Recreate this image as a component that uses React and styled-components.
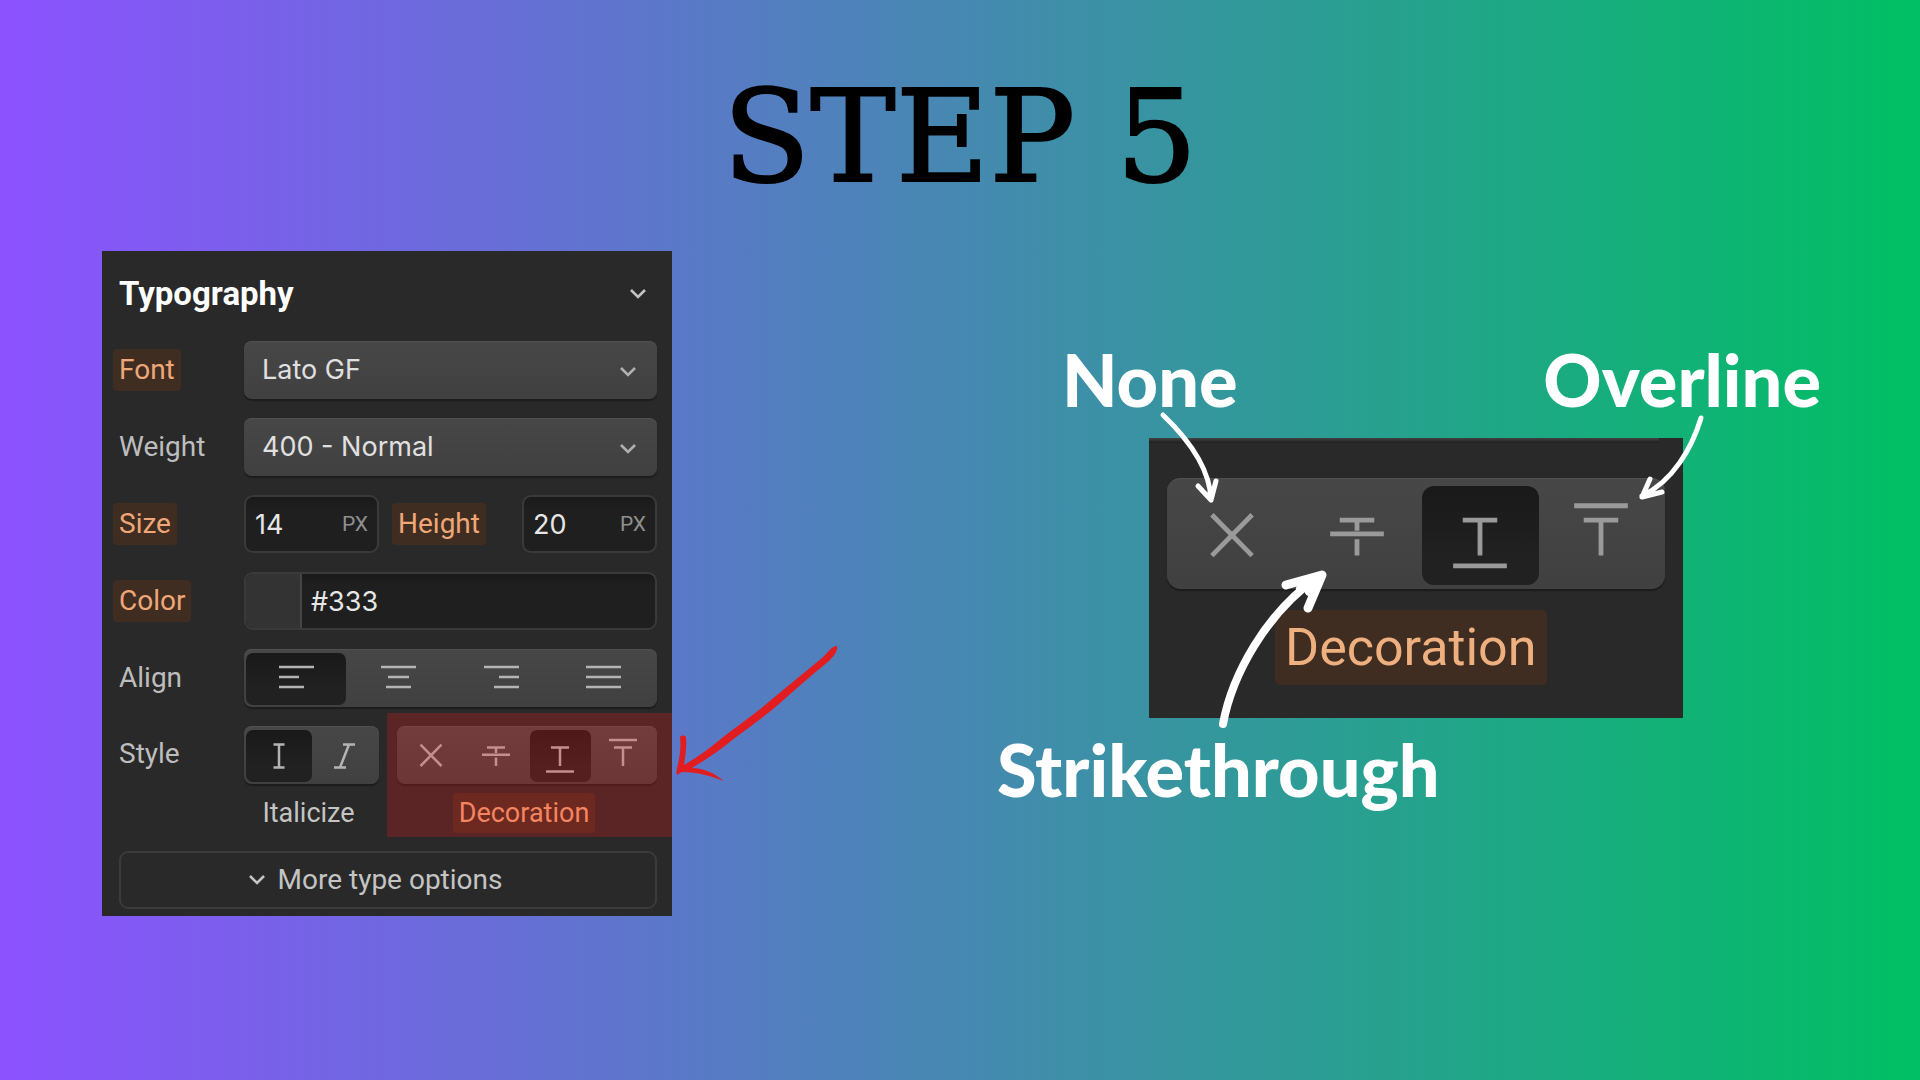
import React, { useState } from "react";
import styled, { createGlobalStyle, css } from "styled-components";

const GlobalStyle = createGlobalStyle`
  *, *::before, *::after { box-sizing: border-box; }
  body { margin: 0; }
  button, input, select { font: inherit; color: inherit; margin: 0; }
`;

const ui = `Roboto, Inter, "Liberation Sans", sans-serif`;
const valueFont = css`
  font-family: Inter, Roboto, "Liberation Sans", sans-serif;
  font-size: 27px;
`;

const Slide = styled.main`
  min-height: 100vh;
  background: linear-gradient(90deg, #8c52ff, #00bf63);
  font-family: ${ui};
`;

const Title = styled.h1`
  margin: 0;
  padding: 73px 0 50px;
  text-align: center;
  font: 400 128px/128px "DejaVu Serif", serif;
  color: #000;
  -webkit-text-stroke: 2px #000;
`;

const Stage = styled.div`
  display: flex;
  justify-content: space-between;
  align-items: flex-start;
  padding: 0 99px 48px 102px;
`;

const Panel = styled.section`
  position: relative;
  width: 570px;
  padding: 0 15px 7px 17px;
  background: #292929;
  color: #d9d9d9;
  font-size: 28px;
  line-height: 42px;
`;

const PanelHeader = styled.header`
  display: flex;
  justify-content: space-between;
  align-items: center;
  height: 85px;
  margin-bottom: 5px;
  padding-right: 10px;
`;

const PanelTitle = styled.h2`
  margin: 0;
  font-size: 33px;
  font-weight: 700;
  color: #fff;
`;

const IconButton = styled.button`
  display: grid;
  place-items: center;
  padding: 0;
  border: 0;
  background: none;
  color: #c4c4c4;
`;

const Rows = styled.div`
  display: grid;
  gap: 19px;
`;

const Row = styled.div`
  display: grid;
  grid-template-columns: 125px 1fr;
  align-items: center;
`;

const tagged = css`
  margin-left: -6px;
  padding: 0 6px;
  border-radius: 4px;
  background: #402d22;
  color: #efa777;
`;

const Label = styled.label`
  justify-self: start;
  color: #bdbdbd;
  ${(p) => p.$tagged && tagged}
`;

const Controls = styled.div`
  display: flex;
  align-items: center;
  gap: 19px;
`;

const SelectBox = styled.div`
  position: relative;
  svg {
    position: absolute;
    right: 20px;
    top: 25px;
    color: #b0b0b0;
    pointer-events: none;
  }
`;

const raised = css`
  border: 0;
  border-radius: 8px;
  background: linear-gradient(#474747, #404040);
  box-shadow: inset 0 1px 0 #505050, 0 2px 1px #1c1c1c;
`;

const Select = styled.select`
  ${raised}
  ${valueFont}
  display: block;
  appearance: none;
  width: 100%;
  height: 58px;
  padding: 0 18px;
  color: #e0e0e0;
`;

const Field = styled.div`
  display: flex;
  align-items: center;
  width: ${(p) => (p.$wide ? "100%" : "135px")};
  height: 58px;
  overflow: hidden;
  border: 2px solid #3a3a3a;
  border-radius: 9px;
  background: linear-gradient(#1a1a1a, #1f1f1f 12px);
  color: #e6e6e6;
  &:last-child { margin-left: auto; }
`;

const TextInput = styled.input`
  ${valueFont}
  flex: 1;
  min-width: 0;
  width: 100%;
  height: 100%;
  padding: 0 9px;
  border: 0;
  outline: 0;
  background: none;
`;

const Unit = styled.span`
  padding-right: 9px;
  font-size: 21px;
  color: #8f8f8f;
`;

const Swatch = styled.input`
  appearance: none;
  flex: none;
  width: 56px;
  height: 54px;
  padding: 0;
  border: 0;
  border-right: 2px solid #454545;
  background: #333;
  &::-webkit-color-swatch-wrapper { padding: 0; }
  &::-webkit-color-swatch { border: 0; }
`;

const Segments = styled.div`
  ${raised}
  display: grid;
  grid-template-columns: ${(p) => p.$columns};
  height: ${(p) => (p.$large ? "111px" : "58px")};
  padding: ${(p) => (p.$large ? "8px 3px 4px" : "4px 2px 2px")};
  border-radius: ${(p) => (p.$large ? "14px" : "8px")};
`;

const Segment = styled.button`
  display: grid;
  place-items: center;
  padding: 0 0 3px;
  border: 0;
  border-radius: ${(p) => (p.$large ? "12px" : "7px")};
  background: ${(p) => (p["aria-pressed"] ? "linear-gradient(#191919, #212121 70%)" : "none")};
  color: ${(p) => (p.$large ? "#9a9a9a" : "#b4b4b4")};
`;

const StyleGrid = styled.div`
  display: grid;
  grid-template-columns: 125px 135px 1fr;
  align-items: start;
  > label, > span { line-height: 56px; }
`;

const Group = styled.div`
  display: grid;
  gap: 9px;
  justify-items: center;
  ${Segments} { width: 100%; }
`;

const DecorationGroup = styled(Group)`
  position: relative;
  margin-left: 18px;
  &::after {
    content: "";
    position: absolute;
    inset: -13px -15px -4px -10px;
    background: rgba(255, 26, 26, 0.24);
    pointer-events: none;
  }
`;

const Caption = styled.span`
  height: 40px;
  line-height: 40px;
  font-size: 27px;
  color: #c4c4c4;
  ${(p) => p.$tagged && tagged}
  margin-left: 0;
  margin-right: 6px;
`;

const MoreButton = styled.button`
  display: flex;
  align-items: center;
  justify-content: center;
  gap: 12px;
  width: 100%;
  height: 58px;
  margin-top: 18px;
  padding: 0 30px 0 4px;
  border: 2px solid #3b3b3b;
  border-radius: 9px;
  background: none;
  color: #c4c4c4;
`;

const Callout = styled.figure`
  position: relative;
  width: 824px;
  margin: 86px 0 0;
`;

const Names = styled.div`
  display: flex;
  justify-content: space-between;
  padding-left: ${(p) => (p.$indent ? "65px" : "0")};
`;

const Name = styled.span`
  font: 900 72px/84px Lato, "Open Sans", sans-serif;
  color: #fff;
`;

const Closeup = styled.div`
  width: 534px;
  height: 280px;
  margin: 17px 0 9px 152px;
  padding: 0 18px;
  background: #292929;
`;

const CloseupEdge = styled.div`
  height: 5px;
  margin: 0 6px 35px -18px;
  background: linear-gradient(#424242, #1f1f1f);
`;

const CloseupCaption = styled.div`
  width: max-content;
  margin: 21px 0 0 108px;
  padding: 0 10px;
  border-radius: 5px;
  background: #402d22;
  color: #efb07f;
  font-size: 52px;
  line-height: 75px;
`;

const Arrows = styled.svg`
  position: absolute;
  inset: 0;
  pointer-events: none;
`;

const RedArrow = styled.svg`
  position: absolute;
  left: 100%;
  top: 390px;
  pointer-events: none;
`;

function Chevron() {
  return (
    <svg width="18" height="12" viewBox="0 0 18 12" fill="none" stroke="currentColor" strokeWidth="2.6" aria-hidden="true">
      <path d="M2 2l7 7 7-7" />
    </svg>
  );
}

const glyphs = {
  none: <path d="M3.5 7.7L24.5 29M24.5 7.7L3.5 29" />,
  strike: <path d="M5 10.5H23M0 17.7H28M14 10.5V16M14 20.5V29" />,
  underline: <path d="M5 10.5H23M14 10.5V29M0 34.4H28" />,
  overline: <path d="M0 3H28M5 10.5H23M14 10.5V29" />,
  upright: <path d="M8.5 7.5H19.5M8.5 30.5H19.5M14 7.5V30.5" />,
  italic: <path d="M13 7.5H25M4 30.5H16M19 7.5L10 30.5" />,
};

function Glyph({ name, large }) {
  return (
    <svg width={large ? 54 : 28} height={large ? 69 : 36} viewBox="0 0 28 36" fill="none" stroke="currentColor" strokeWidth="2.5" overflow="visible" aria-hidden="true">
      {glyphs[name]}
    </svg>
  );
}

const alignLines = {
  left: "M0 2H35M0 12H20M0 22H25",
  center: "M0 2H35M7 12H28M5 22H30",
  right: "M0 2H35M15 12H35M10 22H35",
  justify: "M0 2H35M0 12H35M0 22H35",
};

function AlignGlyph({ name }) {
  return (
    <svg width="35" height="26" viewBox="0 0 35 26" fill="none" stroke="currentColor" strokeWidth="2.5" aria-hidden="true">
      <path d={alignLines[name]} />
    </svg>
  );
}

function Choice({ label, options, initial, large, columns, render }) {
  const [value, setValue] = useState(initial);
  return (
    <Segments role="group" aria-label={label} $large={large} $columns={columns}>
      {options.map((o) => (
        <Segment key={o} type="button" aria-label={o} aria-pressed={o === value} $large={large} onClick={() => setValue(o)}>
          {render(o)}
        </Segment>
      ))}
    </Segments>
  );
}

const decorations = ["none", "strike", "underline", "overline"];
const decorationColumns = "65fr 68fr 62fr 65fr";

function TypographyPanel() {
  return (
    <Panel>
      <PanelHeader>
        <PanelTitle>Typography</PanelTitle>
        <IconButton type="button" aria-label="Collapse"><Chevron /></IconButton>
      </PanelHeader>
      <Rows>
        <Row>
          <Label $tagged htmlFor="font">Font</Label>
          <SelectBox>
            <Select id="font"><option>Lato GF</option></Select>
            <Chevron />
          </SelectBox>
        </Row>
        <Row>
          <Label htmlFor="weight">Weight</Label>
          <SelectBox>
            <Select id="weight"><option>400 - Normal</option></Select>
            <Chevron />
          </SelectBox>
        </Row>
        <Row>
          <Label $tagged htmlFor="size">Size</Label>
          <Controls>
            <Field><TextInput id="size" defaultValue="14" /><Unit>PX</Unit></Field>
            <Label $tagged htmlFor="height">Height</Label>
            <Field><TextInput id="height" defaultValue="20" /><Unit>PX</Unit></Field>
          </Controls>
        </Row>
        <Row>
          <Label $tagged htmlFor="color">Color</Label>
          <Field $wide>
            <Swatch type="color" aria-label="Pick color" defaultValue="#333333" />
            <TextInput id="color" defaultValue="#333" />
          </Field>
        </Row>
        <Row>
          <Label as="span">Align</Label>
          <Choice label="Align" columns="101fr 106fr 103fr 103fr" options={["left", "center", "right", "justify"]} initial="left" render={(o) => <AlignGlyph name={o} />} />
        </Row>
        <StyleGrid>
          <Label as="span">Style</Label>
          <Group>
            <Choice label="Italicize" columns="1fr 1fr" options={["upright", "italic"]} initial="upright" render={(o) => <Glyph name={o} />} />
            <Caption>Italicize</Caption>
          </Group>
          <DecorationGroup>
            <Choice label="Decoration" columns={decorationColumns} options={decorations} initial="underline" render={(o) => <Glyph name={o} />} />
            <Caption $tagged>Decoration</Caption>
          </DecorationGroup>
        </StyleGrid>
      </Rows>
      <MoreButton type="button"><Chevron />More type options</MoreButton>
      <RedArrow width="170" height="150" viewBox="672 641 170 150" fill="#e21d1f" aria-hidden="true">
        <path d="M837 646C838 651 834 656 829 661C814 673 797 688 779 704C764 717 748 728 731 741C719 751 705 760 692 768C703 768 714 773 724 781C711 776 698 772 682 772L677 775C676 772 677 768 678 764C680 755 681 746 680 737C681 735 685 735 686 737C687 747 685 757 684 765C698 757 710 748 722 738C738 725 755 714 771 700C788 686 805 672 822 658C828 653 831 646 837 646Z" />
      </RedArrow>
    </Panel>
  );
}

function DecorationCallout() {
  return (
    <Callout>
      <Names $indent><Name>None</Name><Name>Overline</Name></Names>
      <Closeup>
        <CloseupEdge />
        <Choice large label="Decoration close-up" columns={decorationColumns} options={decorations} initial="underline" render={(o) => <Glyph large name={o} />} />
        <CloseupCaption>Decoration</CloseupCaption>
      </Closeup>
      <Names><Name>Strikethrough</Name></Names>
      <Arrows width="824" height="474" viewBox="997 337 824 474" fill="none" stroke="#fff" strokeWidth="5" strokeLinecap="round" strokeLinejoin="round" aria-hidden="true">
        <path d="M1163 415C1186 437 1210 466 1211 500M1198 486L1211 500L1216 481" />
        <path d="M1701 418C1692 448 1673 481 1642 496M1650 479L1642 497L1662 492" />
        <path strokeWidth="8" d="M1223 724C1232 675 1266 613 1318 577" />
        <path strokeWidth="9" d="M1286 585L1322 575L1308 608" />
        <path strokeWidth="8" d="M1300 589L1318 578L1309 592" />
      </Arrows>
    </Callout>
  );
}

export default function App() {
  return (
    <Slide>
      <GlobalStyle />
      <Title>STEP 5</Title>
      <Stage>
        <TypographyPanel />
        <DecorationCallout />
      </Stage>
    </Slide>
  );
}
